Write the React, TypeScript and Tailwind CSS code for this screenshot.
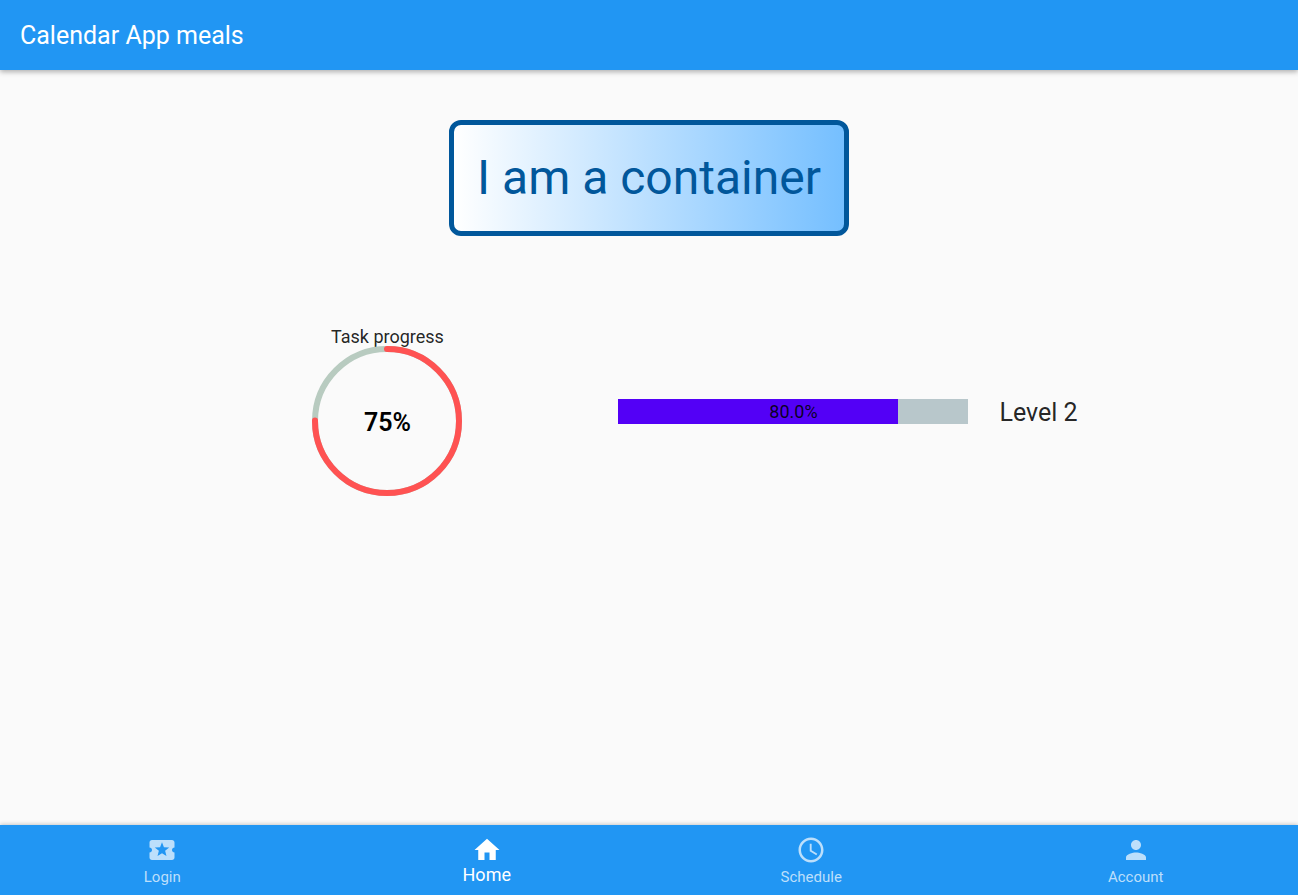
import { MdLocalPlay, MdHome, MdPerson, MdAccessTime } from "react-icons/md";

const tabs = [
  { label: "Login", Icon: MdLocalPlay, active: false },
  { label: "Home", Icon: MdHome, active: true },
  { label: "Schedule", Icon: MdAccessTime, active: false },
  { label: "Account", Icon: MdPerson, active: false },
];

function TaskProgress({ percent }: { percent: number }) {
  const radius = 72;
  const length = 2 * Math.PI * radius;
  return (
    <section className="flex flex-col items-center">
      <h2 className="text-[18px] leading-[18px] text-black/87">Task progress</h2>
      <div className="grid size-[150px] place-items-center">
        <svg viewBox="0 0 150 150" className="col-start-1 row-start-1 size-full" aria-hidden="true">
          <circle cx="75" cy="75" r={radius} fill="none" stroke="#b8cbc0" strokeWidth="6" />
          <circle
            cx="75"
            cy="75"
            r={radius}
            fill="none"
            stroke="#ff5252"
            strokeWidth="6"
            strokeLinecap="round"
            strokeDasharray={`${(length * percent) / 100} ${length}`}
            transform="rotate(-90 75 75)"
          />
        </svg>
        <span className="col-start-1 row-start-1 pt-1 text-[25px] font-semibold leading-7 text-black">{percent}%</span>
      </div>
    </section>
  );
}

function LevelProgress({ percent }: { percent: number }) {
  return (
    <section className="flex items-center gap-[31px] pb-[2px]">
      <div className="grid h-[25px] w-[350px] bg-[#b8c7cb]">
        <div className="col-start-1 row-start-1 bg-[#5300f6]" style={{ width: `${percent}%` }} />
        <span className="col-start-1 row-start-1 place-self-center pt-[2px] text-[18px] leading-5 text-black/87">
          {percent.toFixed(1)}%
        </span>
      </div>
      <h2 className="pt-1 text-[25px] leading-7 text-black/87">Level 2</h2>
    </section>
  );
}

export default function App() {
  return (
    <div className="flex min-h-screen flex-col bg-[#fafafa] font-['Roboto',sans-serif]">
      <header className="z-10 flex h-[70px] items-center bg-[#2196f3] px-5 pt-[2px] shadow-[0_2px_5px_rgba(0,0,0,0.3)]">
        <h1 className="text-[25px] font-normal leading-7 text-white">Calendar App meals</h1>
      </header>

      <main className="flex flex-1 flex-col items-center pt-[50px]">
        <div className="rounded-xl border-5 border-[#01579b] bg-linear-[to_right,#ffffff,#75bfff] px-[23px] py-[25px]">
          <p className="text-[48px] leading-[56px] text-[#01579b]">I am a container</p>
        </div>
        <div className="mt-[92px] flex items-center gap-[156px] pl-[92px]">
          <TaskProgress percent={75} />
          <LevelProgress percent={80} />
        </div>
      </main>

      <nav className="z-10 grid h-[70px] grid-cols-4 bg-[#2196f3] shadow-[0_-1px_4px_rgba(0,0,0,0.2)]">
        {tabs.map(({ label, Icon, active }) => (
          <button
            key={label}
            type="button"
            aria-current={active ? "page" : undefined}
            className={`flex flex-col items-center pt-[10px] ${active ? "text-white" : "text-[#bcdffb]"}`}
          >
            <Icon className="size-[30px]" />
            <span className={active ? "text-[18px] leading-5" : "pt-[2px] text-[15px] leading-5"}>{label}</span>
          </button>
        ))}
      </nav>
    </div>
  );
}
